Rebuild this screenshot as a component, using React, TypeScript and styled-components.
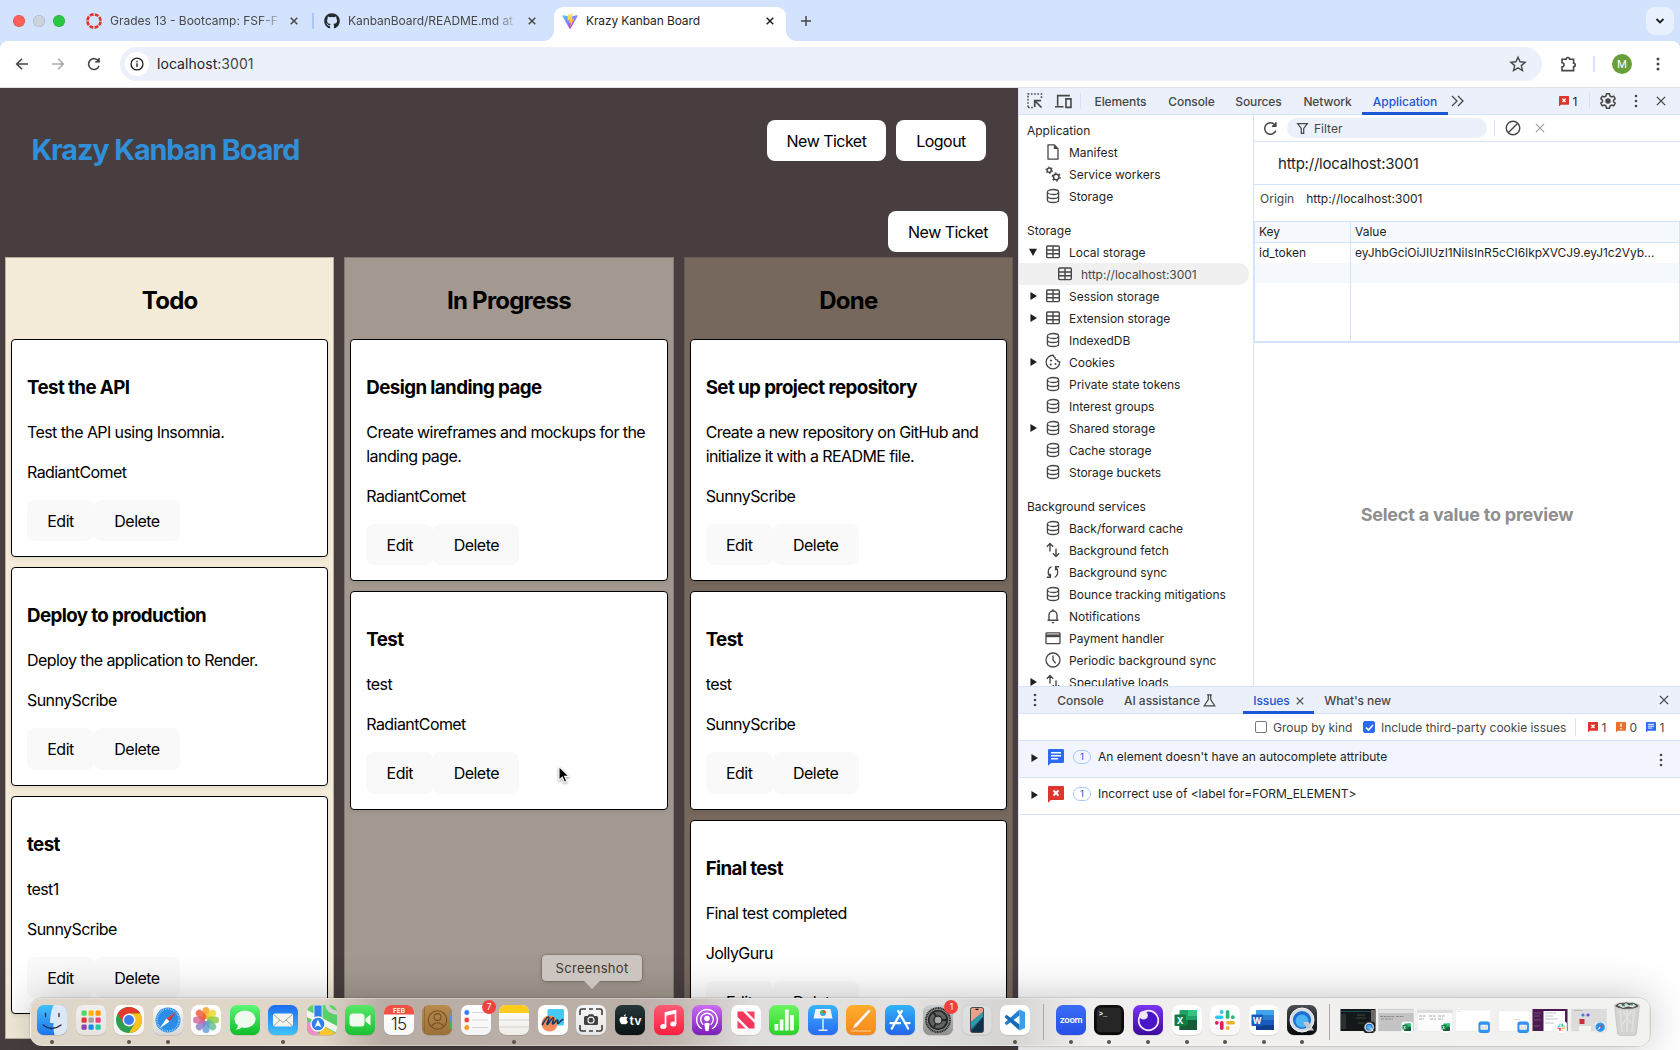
import React from 'react';
import styled, { createGlobalStyle, css } from 'styled-components';
import { FaApple, FaGithub } from 'react-icons/fa';

const GlobalStyle = createGlobalStyle`
  *, *::before, *::after { box-sizing: border-box; }
  body { margin: 0; font-family: Inter, Roboto, sans-serif; overflow: hidden; }
  svg { display: block; flex: none; }
`;

const line = '#d3e3fd';
const ink = '#1f1f1f';
const iconInk = '#474747';

const Screen = styled.div`
  position: relative;
  width: 1680px;
  height: 1050px;
  display: flex;
  flex-direction: column;
  overflow: hidden;
  background: ${line};
  color: ${ink};
`;

/* ---------- tab strip ---------- */
const TabStrip = styled.div`
  height: 41px;
  flex: none;
  display: flex;
  align-items: flex-end;
  padding-left: 13px;
  padding-right: 6px;
`;
const Lights = styled.div`
  display: flex;
  gap: 8px;
  height: 41px;
  align-items: center;
  width: 65px;
`;
const Light = styled.i<{ $c: string }>`
  width: 12px;
  height: 12px;
  border-radius: 50%;
  background: ${p => p.$c};
  box-shadow: inset 0 0 0 0.5px rgba(0, 0, 0, 0.18);
`;
const Tab = styled.div<{ $w: number; $active?: boolean }>`
  position: relative;
  width: ${p => p.$w}px;
  height: 34px;
  display: flex;
  align-items: center;
  gap: 8px;
  padding: 0 10px 6px 8px;
  font-size: 12px;
  color: ${p => (p.$active ? ink : '#474747')};
  ${p =>
    p.$active &&
    css`
      background: #fff;
      border-radius: 9px 9px 0 0;
      &::before,
      &::after {
        content: '';
        position: absolute;
        bottom: 0;
        width: 10px;
        height: 10px;
      }
      &::before {
        left: -10px;
        background: radial-gradient(circle at 0 0, transparent 9.5px, #fff 10px);
      }
      &::after {
        right: -10px;
        background: radial-gradient(circle at 100% 0, transparent 9.5px, #fff 10px);
      }
    `}
`;
const TabTitle = styled.span<{ $fade?: boolean; $ls?: number }>`
  flex: 1;
  min-width: 0;
  overflow: hidden;
  white-space: nowrap;
  line-height: 16px;
  letter-spacing: ${p => p.$ls ?? 0}px;
  ${p => p.$fade && 'mask-image: linear-gradient(90deg, #000 87%, transparent 102%);'}
`;
const TabDivider = styled.i`
  width: 2px;
  height: 16px;
  margin-bottom: 12px;
  background: #a8c7fa;
`;
const Spacer = styled.i`
  flex: 1;
`;
const NewTab = styled.div`
  width: 40px;
  height: 41px;
  display: flex;
  align-items: center;
  justify-content: center;
`;
const TabSearch = styled.div`
  width: 28px;
  height: 28px;
  margin-bottom: 6px;
  border-radius: 9px;
  background: #e9f0fe;
  display: flex;
  align-items: center;
  justify-content: center;
`;

/* ---------- address bar ---------- */
const Toolbar = styled.div`
  height: 47px;
  flex: none;
  display: flex;
  align-items: center;
  background: #fff;
  border-bottom: 1px solid #e3e3e3;
  border-radius: 8px 8px 0 0;
  padding-left: 14px;
`;
const NavButton = styled.div<{ $dim?: boolean }>`
  width: 36px;
  display: flex;
  justify-content: flex-start;
  opacity: ${p => (p.$dim ? 0.45 : 1)};
`;
const Omnibox = styled.div`
  width: 1422px;
  height: 34px;
  margin-left: -2px;
  border-radius: 17px;
  background: #ecf0fa;
  display: flex;
  align-items: center;
  padding: 0 15px 0 5px;
  font-size: 14px;
  line-height: 17px;
  letter-spacing: 0.05px;
`;
const Address = styled.span`
  padding-bottom: 1px;
`;
const SiteInfo = styled.div`
  width: 24px;
  height: 24px;
  border-radius: 50%;
  background: #fff;
  display: flex;
  align-items: center;
  justify-content: center;
  margin-right: 8px;
`;
const Port = styled.span`
  color: #474747;
`;
const ToolbarEnd = styled.div`
  flex: 1;
  display: flex;
  align-items: center;
  padding-left: 17px;
`;
const VRule = styled.i<{ $h?: number; $m?: string; $w?: number }>`
  flex: none;
  width: ${p => p.$w ?? 1}px;
  height: ${p => p.$h ?? 16}px;
  margin: ${p => p.$m ?? '0'};
  background: ${line};
`;
const Avatar = styled.div`
  width: 20px;
  height: 20px;
  border-radius: 50%;
  background: #689f38;
  color: #fff;
  font-size: 11px;
  display: flex;
  align-items: center;
  justify-content: center;
  margin-right: 16px;
`;

/* ---------- kanban page ---------- */
const Content = styled.div`
  flex: 1;
  min-height: 0;
  display: grid;
  grid-template-columns: 1018px 1fr;
`;
const Page = styled.main`
  background: #483e3f;
  overflow: hidden;
  color: #000;
  font-size: 16px;
  line-height: 24px;
  letter-spacing: -0.58px;
`;
const PageHeader = styled.header`
  height: 123px;
  padding: 32px;
  display: flex;
  justify-content: space-between;
  align-items: flex-start;
`;
const Brand = styled.h1`
  margin: 8px 0 0 -0.5px;
  font-size: 28.8px;
  line-height: 43px;
  letter-spacing: -1.1px;
  color: #2f8fd9;
`;
const ButtonRow = styled.div<{ $gap?: number; $end?: boolean }>`
  display: flex;
  gap: ${p => p.$gap ?? 0}px;
  ${p => p.$end && 'justify-content: flex-end; padding: 0 10px 5px;'}
`;
const Button = styled.button<{ $w: number; $soft?: boolean }>`
  width: ${p => p.$w}px;
  height: ${p => (p.$soft ? 41.4 : 41)}px;
  padding: 0;
  border: 0;
  border-radius: 8px;
  font: inherit;
  letter-spacing: -0.52px;
  color: #000;
  background: ${p => (p.$soft ? '#f9f9f9' : '#fff')};
`;
const Columns = styled.div`
  display: grid;
  grid-template-columns: repeat(3, 1fr);
  gap: 10px;
  padding: 0 5px;
`;
const Column = styled.section<{ $bg: string }>`
  height: 782px;
  overflow: hidden;
  border: 1px solid rgba(72, 62, 63, 0.35);
  background: ${p => p.$bg};
  padding: 0 5px;
`;
const ColumnTitle = styled.h2`
  margin: 25px 0 19.9px;
  text-align: center;
  font-size: 24px;
  line-height: 36px;
  letter-spacing: -0.78px;
`;
const Card = styled.article`
  margin-bottom: 10px;
  padding: 15px;
  background: #fff;
  border: 1px solid #000;
  border-radius: 4px;
  box-shadow: 0 2px 4px rgba(0, 0, 0, 0.08);
`;
const CardTitle = styled.h3`
  margin: 18.72px 0 18.3px;
  font-size: 18.72px;
  line-height: 28.08px;
  letter-spacing: -0.58px;
`;
const CardText = styled.p`
  margin: 0 0 16px;
`;

/* ---------- devtools ---------- */
const DevTools = styled.aside`
  min-width: 0;
  min-height: 0;
  display: flex;
  flex-direction: column;
  border-left: 1px solid ${line};
  background: #fff;
  font-size: 12px;
`;
const DevBar = styled.div`
  height: 27px;
  flex: none;
  display: flex;
  align-items: center;
  background: #ecf0fa;
  border-bottom: 1px solid ${line};
`;
const DevTab = styled.div<{ $w: number; $active?: boolean; $ls?: number; $gap?: number; $mr?: number }>`
  width: ${p => p.$w}px;
  height: 27px;
  margin-bottom: -1px;
  margin-right: ${p => p.$mr ?? 0}px;
  display: flex;
  align-items: center;
  justify-content: center;
  gap: ${p => p.$gap ?? 6}px;
  font-weight: 500;
  white-space: nowrap;
  letter-spacing: ${p => p.$ls ?? -0.1}px;
  color: ${p => (p.$active ? '#1a56d6' : '#474747')};
  box-shadow: ${p => (p.$active ? 'inset 0 -3px 0 #1a56d6' : 'none')};
`;
const DevBody = styled.div`
  height: 571px;
  flex: none;
  display: grid;
  grid-template-columns: 235px 1fr;
  overflow: hidden;
`;
const Tree = styled.nav`
  height: 571px;
  overflow: hidden;
  border-right: 1px solid ${line};
  padding: 5px 4px 0 0;
  letter-spacing: -0.03px;
`;
const TreeHead = styled.div`
  height: 21px;
  line-height: 22px;
  padding-left: 8px;
`;
const TreeGroup = styled.div`
  margin-bottom: 13px;
`;
const TreeRow = styled.div<{ $sel?: boolean; $deep?: boolean }>`
  height: 22px;
  display: flex;
  align-items: center;
  padding-left: ${p => (p.$deep ? 22 : 10)}px;
  border-radius: 0 11px 11px 0;
  background: ${p => (p.$sel ? '#f0f0f0' : 'transparent')};
  color: ${p => (p.$sel ? '#474747' : ink)};
`;
const Arrow = styled.i<{ $open?: boolean; $off?: boolean }>`
  flex: none;
  width: 8px;
  height: 8px;
  visibility: ${p => (p.$off ? 'hidden' : 'visible')};
  background: ${ink};
  clip-path: ${p => (p.$open ? 'polygon(0 8%, 100% 8%, 50% 100%)' : 'polygon(18% 0, 100% 50%, 18% 100%)')};
`;
const TreeIcon = styled.span`
  width: 16px;
  margin: 0 8px;
`;
const Detail = styled.div`
  min-width: 0;
  display: flex;
  flex-direction: column;
`;
const DetailBar = styled.div`
  height: 27px;
  flex: none;
  display: flex;
  align-items: center;
  border-bottom: 1px solid ${line};
  padding-left: 7.5px;
`;
const Filter = styled.div`
  width: 200px;
  height: 20px;
  margin: 0 7px 0 8.5px;
  padding-left: 9px;
  border-radius: 10px;
  background: #ecf0fa;
  color: #474747;
  display: flex;
  align-items: center;
  gap: 5px;
`;
const DetailTitle = styled.div`
  height: 43px;
  flex: none;
  line-height: 43px;
  padding-left: 24px;
  border-bottom: 1px solid ${line};
  font-size: 15px;
  letter-spacing: -0.22px;
`;
const OriginRow = styled.div`
  height: 36px;
  flex: none;
  display: flex;
  gap: 12px;
  line-height: 28px;
  padding-left: 6px;
  & > :first-child {
    color: #474747;
  }
`;
const Table = styled.div`
  height: 122px;
  flex: none;
  border: 1px solid ${line};
  border-bottom-width: 2px;
  display: grid;
  grid-template-columns: 96px 1fr;
  grid-template-rows: 21px 20px 20px 1fr;
`;
const Cell = styled.div<{ $alt?: boolean; $head?: boolean; $key?: boolean }>`
  min-width: 0;
  padding-left: 4px;
  line-height: 20px;
  white-space: nowrap;
  overflow: hidden;
  background: ${p => (p.$alt ? '#f5f9fd' : '#fff')};
  ${p => p.$head && `border-bottom: 1px solid ${line};`}
  ${p => p.$key && `border-right: 1px solid ${line};`}
`;
const Token = styled.span`
  letter-spacing: -0.06px;
`;
const Preview = styled.div`
  flex: 1;
  display: flex;
  align-items: center;
  justify-content: center;
  font-size: 18px;
  font-weight: 700;
  letter-spacing: -0.22px;
  color: #8f8f8f;
`;
const Drawer = styled.section`
  flex: 1;
  min-height: 0;
`;
const DrawerBar = styled(DevBar)`
  height: 28px;
  border-top: 1px solid ${line};
`;
const IssueTools = styled.div`
  height: 27px;
  display: flex;
  align-items: center;
  justify-content: flex-end;
  padding-right: 14px;
  color: #474747;
  border-bottom: 1px solid ${line};
`;
const Check = styled.i<{ $on?: boolean }>`
  width: 12px;
  height: 12px;
  margin-right: 6px;
  border-radius: 2px;
  border: 1px solid ${p => (p.$on ? '#2a6af5' : '#767676')};
  background: ${p => (p.$on ? '#2a6af5' : '#fff')};
  display: flex;
  align-items: center;
  justify-content: center;
`;
const Label = styled.span<{ $w?: number; $ls?: number; $up?: boolean }>`
  white-space: nowrap;
  letter-spacing: ${p => p.$ls ?? 0}px;
  ${p => p.$w && `width: ${p.$w}px;`}
  ${p => p.$up && 'margin-top: -1px;'}
`;
const Issue = styled.div<{ $bg?: string }>`
  height: 37px;
  display: flex;
  align-items: flex-start;
  padding: 8px 15px 0 11px;
  border-bottom: 1px solid ${line};
  background: ${p => p.$bg ?? '#fff'};
  line-height: 17px;
`;
const Pill = styled.span`
  width: 18px;
  height: 14px;
  margin: 1px 7px 0 9px;
  border: 1px solid #a8c7fa;
  border-radius: 7px;
  color: #1a56d6;
  font-size: 9.5px;
  line-height: 12px;
  text-align: center;
`;
const IssueArrow = styled(Arrow)`
  margin: 5px 10px 0 0;
`;
const Slot = styled.span<{ $m?: string }>`
  margin: ${p => p.$m ?? '0'};
`;

/* ---------- dock ---------- */
const Dock = styled.div`
  position: absolute;
  left: 30px;
  top: 998px;
  width: 1620px;
  height: 48px;
  border-radius: 12px;
  border: 1px solid rgba(255, 255, 255, 0.35);
  background: linear-gradient(
    90deg,
    #ded6c9 0,
    #dfd6c8 290px,
    #b9aea5 350px,
    #bbb0a8 600px,
    #c3bab4 650px,
    #dedddc 720px,
    #e3e2e1 870px,
    #d6d4d3 980px,
    #f0efee 1060px,
    #f2f2f0 1620px
  );
  box-shadow: 0 0 0 0.5px rgba(0, 0, 0, 0.22), 0 0 42px rgba(0, 0, 0, 0.25);
  display: flex;
  padding: 5.3px 0 0 2px;
`;
const DockItem = styled.div<{ $run?: boolean }>`
  position: relative;
  width: 38.52px;
  height: 40px;
  flex: none;
  display: flex;
  justify-content: center;
  ${p =>
    p.$run &&
    css`
      &::after {
        content: '';
        position: absolute;
        left: 17.25px;
        top: 35.7px;
        width: 4px;
        height: 4px;
        border-radius: 50%;
        background: #5a5247;
      }
    `}
`;
const DockRule = styled.div`
  width: 17.3px;
  display: flex;
  justify-content: center;
  &::after {
    content: '';
    width: 1px;
    height: 36px;
    background: #a9a7a5;
  }
`;
const Badge = styled.span`
  position: absolute;
  right: -1px;
  top: -4px;
  width: 14px;
  height: 14px;
  border-radius: 50%;
  background: #f0413c;
  color: #fff;
  font-size: 8.5px;
  line-height: 14px;
  text-align: center;
`;
const Tooltip = styled.div`
  position: absolute;
  left: 542px;
  top: 955px;
  width: 100px;
  height: 26px;
  border-radius: 4px;
  background: #ccc4be;
  box-shadow: 0 0 0 0.5px rgba(0, 0, 0, 0.25), 0 1px 5px rgba(0, 0, 0, 0.2);
  color: #3b3734;
  font-size: 13px;
  letter-spacing: 0.3px;
  line-height: 26px;
  text-align: center;
  &::after {
    content: '';
    position: absolute;
    left: 42px;
    top: 26px;
    width: 16px;
    height: 8px;
    background: #ccc4be;
    clip-path: polygon(0 0, 100% 0, 62% 75%, 50% 100%, 38% 75%);
  }
`;
const Cursor = styled.svg`
  position: absolute;
  left: 557px;
  top: 765px;
  filter: drop-shadow(0 1px 1px rgba(0, 0, 0, 0.4));
`;

/* ---------- small icons ---------- */
const Stroke = ({ d, s = 16, w = 1.4, c = iconInk, vb = 16, children }: any) => (
  <svg width={s} height={s} viewBox={`0 0 ${vb} ${vb}`} fill="none" stroke={c} strokeWidth={w}>
    {d && <path d={d} />}
    {children}
  </svg>
);
const Cross = ({ s = 8, w = 1.5, c = iconInk }: any) => <Stroke s={s} vb={8} w={w} c={c} d="M.7.7l6.6 6.6M7.3.7L.7 7.3" />;
const Dots = ({ r = 1.3 }: { r?: number }) => (
  <svg width="4" height="16" viewBox="0 0 4 16" fill={iconInk}>
    <circle cx="2" cy="3" r={r} />
    <circle cx="2" cy="8" r={r} />
    <circle cx="2" cy="13" r={r} />
  </svg>
);
const Reload = ({ s = 16, w = 1.6 }: any) => (
  <Stroke s={s} w={w}>
    <path d="M13 10a5.4 5.4 0 1 1-.6-5" />
    <path d="M13.4 2v4.2H9.2z" fill={iconInk} stroke="none" />
    <path d="M13 2.2v3.6H9.4" />
  </Stroke>
);
const Database = () => (
  <Stroke w={1.3}>
    <ellipse cx="8" cy="4" rx="5.6" ry="2.5" />
    <path d="M2.4 4v8c0 1.4 2.5 2.5 5.6 2.5s5.6-1.1 5.6-2.5V4M2.4 8c0 1.4 2.5 2.5 5.6 2.5s5.6-1.1 5.6-2.5" />
  </Stroke>
);
const Grid = () => (
  <Stroke w={1.4}>
    <rect x="1.7" y="2" width="12.6" height="11.6" rx="1" />
    <path d="M1.7 6h12.6M1.7 9.8h12.6M8 2v11.6" />
  </Stroke>
);
const File = () => (
  <Stroke w={1.3}>
    <path d="M3 .8h6.2l3.8 3.8v10.6H3z" strokeLinejoin="round" />
    <path d="M8.8 1v4H13z" fill={iconInk} stroke="none" />
  </Stroke>
);
const Gears = () => (
  <Stroke w={1.5}>
    <circle cx="4.2" cy="4.2" r="2.1" />
    <circle cx="4.2" cy="4.2" r="3.2" strokeDasharray="1.5 1.85" strokeWidth="1.1" />
    <circle cx="11.2" cy="11" r="2.7" />
    <circle cx="11.2" cy="11" r="4" strokeDasharray="1.9 2.29" strokeWidth="1.3" />
  </Stroke>
);
const Cookie = () => (
  <Stroke w={1.3}>
    <path d="M8.5 1.3a6.8 6.8 0 1 0 6.2 6.5c-1.3.1-2.3-.6-2.4-1.9-1.5.1-2.5-.8-2.3-2.3-1.1-.2-1.6-1.2-1.5-2.3z" />
    <g fill={iconInk} stroke="none">
      <circle cx="6" cy="6.5" r="1.1" />
      <circle cx="5.8" cy="10.5" r="1.1" />
      <circle cx="10.5" cy="10" r="1" />
    </g>
  </Stroke>
);
const UpDown = () => <Stroke w={1.4} d="M5 9.5V1.5M1.8 4.7L5 1.5l3.2 3.2M11 6.5v8M7.8 11.3l3.2 3.2 3.2-3.2" />;
const Sync = () => (
  <Stroke w={1.4}>
    <path d="M6.5 2.6C3.5 3.7 1.9 8.5 4.6 12M9.5 13.4c3-1.1 4.6-5.9 1.9-9.4M1.8 13.3h3.6V9.7M14.2 2.7h-3.6v3.6" />
  </Stroke>
);
const Bell = () => (
  <Stroke w={1.4}>
    <path d="M2.5 12.3h11M4 12V7a4 4 0 0 1 8 0v5M8 1.2v1.8" />
    <path d="M6.6 14h2.8a1.4 1.4 0 0 1-2.8 0z" fill={iconInk} stroke="none" />
  </Stroke>
);
const CardIcon = () => (
  <Stroke w={1.3}>
    <rect x="1" y="2.8" width="14" height="10.8" rx=".7" />
    <path d="M1 5.8h14" strokeWidth="2.8" />
  </Stroke>
);
const Clock = () => (
  <Stroke w={1.3}>
    <circle cx="8" cy="8" r="7" />
    <path d="M8 3.5V8l2.8 3.3" />
  </Stroke>
);
const Bubble = ({ kind, s }: { kind: 'x' | '!' | 't'; s: number }) => (
  <svg width={s} height={s * 1.05} viewBox="0 0 16 16.8">
    <path d="M1 0h14q1 0 1 1v12q0 1-1 1H3L0 16.8V1q0-1 1-1z" fill={kind === 'x' ? '#dc362e' : kind === '!' ? '#e8702a' : '#2a6af5'} />
    {kind === 'x' && <path d="M5.5 4.5l5 5m0-5l-5 5" stroke="#fff" strokeWidth="2" />}
    {kind === '!' && <path d="M8 2.5v5.5M8 9.5v2" stroke="#fff" strokeWidth="2" />}
    {kind === 't' && <path d="M3 3.7h10M3 6.7h10M3 9.7h7" stroke="#fff" strokeWidth="1.5" />}
  </svg>
);
const ViteLogo = () => (
  <svg width="16" height="16" viewBox="0 0 32 32">
    <defs>
      <linearGradient id="va" x1="0" y1="0" x2=".6" y2="1">
        <stop stopColor="#41d1ff" />
        <stop offset="1" stopColor="#bd34fe" />
      </linearGradient>
      <linearGradient id="vb" x1=".4" y1="0" x2=".6" y2="1">
        <stop stopColor="#ffea83" />
        <stop offset="1" stopColor="#ffa800" />
      </linearGradient>
    </defs>
    <path d="M31 6.3L17 31q-1 1.5-2 0L1 6.3Q.5 4.5 2.3 4.7L16 7.2l13.7-2.5Q31.5 4.5 31 6.3z" fill="url(#va)" />
    <path d="M22.3 1.2l-10 2q-.6.1-.7.8L11 14.3q0 .9.9.7l2.8-.6q.9-.1.7.7l-.9 4q-.2.9.7.7l1.7-.5q.9-.2.7.7l-1.3 6q0 1 .7.3L24 12q.4-.9-.6-.8l-3 .5q-.8.1-.6-.6l2-9q.2-1-.5-.9z" fill="url(#vb)" />
  </svg>
);

/* ---------- dock artwork ---------- */
const TileSvg = styled.svg`
  overflow: visible;
`;
const Tile = ({ a, b, id, children, edge }: any) => (
  <TileSvg width="32" height="32" viewBox="-1 -1 32 32">
    <defs>
      <linearGradient id={`g${id}`} x1="0" y1="0" x2="0" y2="1">
        <stop stopColor={a} />
        <stop offset="1" stopColor={b} />
      </linearGradient>
      <clipPath id={`c${id}`}>
        <rect width="30" height="30" rx="7" />
      </clipPath>
    </defs>
    <rect y=".6" width="30" height="30" rx="7" fill="rgba(0,0,0,.2)" />
    <rect width="30" height="30" rx="7" fill={`url(#g${id})`} stroke={edge} />
    <g clipPath={`url(#c${id})`}>{children}</g>
  </TileSvg>
);

const petals = ['#f9a01b', '#e6d72a', '#8fc93a', '#5fbf8f', '#5b9fd8', '#8a7cc8', '#d5659a', '#ee5a3a'];
const gridColors = ['#4cd964', '#ffb300', '#ff9500', '#e53935', '#9e9e9e', '#ec407a', '#8e44ad', '#1e88e5', '#26c6a0'];

const slackGlyph = (
  <g>
    <g fill="#36c5f0"><rect x="5" y="10.5" width="8.5" height="3.6" rx="1.8" /><circle cx="11.7" cy="7" r="1.9" /></g>
    <g fill="#2eb67d"><rect x="15.8" y="5" width="3.6" height="9" rx="1.8" /><circle cx="22.8" cy="12.2" r="1.9" /></g>
    <g fill="#ecb22e"><rect x="16" y="16" width="9" height="3.6" rx="1.8" /><circle cx="17.7" cy="23" r="1.9" /></g>
    <g fill="#e01e5a"><rect x="10" y="16" width="3.6" height="9" rx="1.8" /><circle cx="6.8" cy="17.8" r="1.9" /></g>
  </g>
);
const compass = (
  <g>
    <circle cx="15" cy="15" r="12.5" fill="#2a8ee8" />
    <circle cx="15" cy="15" r="11" fill="none" stroke="#fff" strokeWidth="1.8" strokeDasharray=".5 1.23" opacity=".8" />
    <path d="M23.5 6.5L13.5 13.5l1.5 1.5z" fill="#f44336" />
    <path d="M23.5 6.5L16.5 16.5l-1.5-1.5z" fill="#d32f2f" />
    <path d="M6.5 23.5l7-10 3 3z" fill="#fff" />
  </g>
);
const envelope = (
  <g>
    <rect x="5" y="8.5" width="20" height="13" rx="2" fill="#f3f3ee" />
    <path d="M5.5 9.5l9.5 8 9.5-8M5.5 21l6.5-6M24.5 21L18 15" stroke="#8f8f8f" fill="none" strokeWidth=".8" />
  </g>
);
const quick = (
  <g>
    <circle cx="15" cy="15" r="12" fill="#d5dbe0" />
    <circle cx="15" cy="15" r="9" fill="#1f6fd0" />
    <circle cx="15" cy="16" r="6.5" fill="#4ab4f4" />
    <path d="M16 17h5.5l5.5 8.5h-6z" fill="#c4c9cf" />
    <circle cx="15" cy="15" r="12" fill="none" stroke="#f2f4f6" strokeWidth="1" />
  </g>
);
const excel = (
  <g>
    <rect x="7.5" y="5" width="17.5" height="20" rx="1" fill="#21a366" />
    <path d="M16 5h9v6h-9z" fill="#33c481" />
    <path d="M16 15h9v5h-9zM7.5 20H25v5H7.5z" fill="#185c37" />
    <path d="M7.5 15H16v5H7.5z" fill="#107c41" />
    <rect x="2.5" y="9.5" width="11.5" height="11.5" rx="1" fill="#107c41" />
    <text x="8.2" y="18.5" fontSize="9" fontWeight="700" textAnchor="middle" fill="#fff">X</text>
  </g>
);

type App = { id: string; run?: boolean; badge?: string; art: React.ReactNode };
const apps: App[] = [
  { id: 'finder', run: true, art: (
    <Tile id="finder" a="#3fc0fb" b="#1e74f0">
      <path d="M16.5 0H30v30H17.5q-1.5-6-1-12h-3.5Q13 8 16.5 0z" fill="#dde8f4" />
      <path d="M8.5 8.5v3M22 8.5v3M6 20q9 7 18 0" stroke="#1d2c45" strokeWidth="1.3" fill="none" strokeLinecap="round" />
    </Tile>) },
  { id: 'launch', art: (
    <Tile id="launch" a="#f1efee" b="#e6e3df">
      {gridColors.map((c, i) => <rect key={c} x={5.5 + (i % 3) * 7} y={5.5 + Math.floor(i / 3) * 7} width="5.2" height="5.2" rx="1.2" fill={c} />)}
    </Tile>) },
  { id: 'chrome', run: true, art: (
    <Tile id="chrome" a="#fff" b="#f4f4f4">
      <circle cx="15" cy="15" r="13" fill="#2f9e4f" />
      <path d="M3.7 8.5A13 13 0 0 1 26.3 8.5H15L9.4 18.2z" fill="#e2392d" />
      <path d="M26.3 8.5A13 13 0 0 1 15 28l5.7-9.8L15 8.5z" fill="#fbc116" />
      <circle cx="15" cy="15" r="6.4" fill="#fff" />
      <circle cx="15" cy="15" r="5" fill="#3b7ded" />
    </Tile>) },
  { id: 'safari', run: true, art: <Tile id="safari" a="#fafafa" b="#d8d8d8">{compass}</Tile> },
  { id: 'photos', art: (
    <Tile id="photos" a="#fff" b="#fafafa">
      {petals.map((c, i) => <rect key={c} x="11.5" y="2" width="7" height="12" rx="3.5" fill={c} opacity=".82" transform={`rotate(${i * 45} 15 15)`} />)}
    </Tile>) },
  { id: 'messages', art: (
    <Tile id="messages" a="#5df777" b="#0cbd29">
      <ellipse cx="15" cy="14.2" rx="10.5" ry="8.7" fill="#f0fbf0" />
      <path d="M8 20q0 3-2.5 4.5 4 .5 6.5-2.5z" fill="#e4f7e4" />
    </Tile>) },
  { id: 'mail', run: true, art: <Tile id="mail" a="#1e6cf0" b="#3fc3fb">{envelope}</Tile> },
  { id: 'maps', art: (
    <Tile id="maps" a="#5fd56b" b="#4cc85c">
      <path d="M0 12l30 16v-7L0 5z" fill="#f5f5f0" />
      <path d="M0 16v14h12L8 20z" fill="#ef8fc6" />
      <path d="M14 24l10 6H12z" fill="#fbc62c" />
      <path d="M7 0h8v16H7z" fill="#2f7fec" stroke="#fff" strokeWidth=".8" />
      <path d="M20-2q0 9 12 10" stroke="#d2d2d2" strokeWidth="4" fill="none" />
      <path d="M16 24l14 8" stroke="#fbc62c" strokeWidth="5" />
      <circle cx="11" cy="19" r="7" fill="#2f7fec" stroke="#fff" strokeWidth="1.3" />
      <path d="M11 14.5l3.5 8-3.5-2-3.5 2z" fill="#fff" />
    </Tile>) },
  { id: 'facetime', art: (
    <Tile id="facetime" a="#57e768" b="#1cc034">
      <rect x="4.5" y="8.5" width="15" height="13" rx="3.5" fill="#eefbee" />
      <path d="M20.5 13.5l5-4v11l-5-4z" fill="#eefbee" />
    </Tile>) },
  { id: 'calendar', art: (
    <Tile id="calendar" a="#fff" b="#f7f7f7">
      <path d="M0 0h30v9.5H0z" fill="#ee5145" />
      <text x="15" y="7.5" fontSize="6.5" fontWeight="600" textAnchor="middle" fill="#fff">FEB</text>
      <text x="14.8" y="25" fontSize="17" fontWeight="300" textAnchor="middle" fill="#222" letterSpacing="-.5">15</text>
    </Tile>) },
  { id: 'contacts', art: (
    <Tile id="contacts" a="#b98b4e" b="#9b7038">
      <path d="M27.5 5h3v6h-3z" fill="#888" /><path d="M27.5 11h3v6h-3z" fill="#3b9ae0" /><path d="M27.5 17h3v7h-3z" fill="#45b24f" />
      <g fill="none" stroke="#755225" strokeWidth="1.1"><circle cx="15.5" cy="15" r="9.2" /><circle cx="15.5" cy="12" r="3.4" /><path d="M9 21.5q6.5-7.5 13 0" /></g>
      <path d="M2.5 0v30" stroke="#8a6230" strokeWidth=".7" />
    </Tile>) },
  { id: 'reminders', badge: '7', art: (
    <Tile id="reminders" a="#fff" b="#f4f4f4">
      {['#2f7bf6', '#f0463b', '#f7941d'].map((c, i) => (
        <g key={c}><circle cx="5.8" cy={7.5 + i * 7.5} r="2.2" fill={c} stroke={c} strokeOpacity=".3" strokeWidth="1.4" /><path d={`M11 ${7.5 + i * 7.5}h16`} stroke="#cfcfcf" strokeWidth=".9" /></g>
      ))}
    </Tile>) },
  { id: 'notes', run: true, art: (
    <Tile id="notes" a="#fff" b="#eeece7">
      <path d="M0 0h30v8H0z" fill="#fccb1c" />
      <path d="M0 15h30M0 22h30" stroke="#cfcbc4" strokeWidth=".8" />
    </Tile>) },
  { id: 'freeform', art: (
    <Tile id="freeform" a="#fff" b="#fff">
      <rect x="9.5" y="4" width="16.5" height="16.5" rx="1.5" fill="#45c8f5" />
      <circle cx="11.5" cy="18.5" r="8" fill="#f58a5a" />
      <path d="M4.5 19.5C7 15 9.5 11.5 10.8 12.2S8 19 9.2 19.5s4.5-7.5 6-6.8-1.7 6-.4 6.3 3.2-4.5 4.5-4-.6 3.3.6 3.5 2.5-3 5-4" stroke="#17365f" strokeWidth="1.6" fill="none" strokeLinecap="round" />
    </Tile>) },
  { id: 'screenshot', art: (
    <Tile id="screenshot" a="#f6f6f6" b="#e6e6e6">
      <path d="M4 10V6q0-2 2-2h4M13 4h4M20 4h4q2 0 2 2v4M26 20v4q0 2-2 2h-4M17 26h-4M10 26H6q-2 0-2-2v-4" stroke="#3c3c3c" strokeWidth="1.6" fill="none" />
      <path d="M9.5 11h2.3l1-1.7h4.4l1 1.7h2.3q1.5 0 1.5 1.5v6q0 1.5-1.5 1.5h-11Q8 20 8 18.5v-6Q8 11 9.5 11z" fill="#404040" />
      <circle cx="15" cy="15.2" r="3" fill="none" stroke="#eee" strokeWidth="1.2" />
    </Tile>) },
  { id: 'tv', art: (
    <Tile id="tv" a="#26383a" b="#0b1213">
      <g transform="translate(3 8.5)"><FaApple size={11.5} color="#fff" /></g>
      <text x="14.5" y="19.5" fontSize="12.5" fontWeight="600" fill="#fff">tv</text>
    </Tile>) },
  { id: 'music', art: (
    <Tile id="music" a="#fc5c74" b="#fa1f3f">
      <path d="M11.5 21V8l10-2.3v13" stroke="#fff" strokeWidth="1.7" fill="none" /><path d="M11 7.5l11-2.5v3.5L11 11z" fill="#fff" />
      <ellipse cx="9.3" cy="21.5" rx="3.1" ry="2.5" fill="#fff" /><ellipse cx="19.3" cy="19" rx="3.1" ry="2.5" fill="#fff" />
    </Tile>) },
  { id: 'podcasts', art: (
    <Tile id="podcasts" a="#cc6cf3" b="#7a1fb8">
      <g fill="none" stroke="#fff" strokeWidth="1.4" strokeLinecap="round"><path d="M9.5 23.5a10.3 10.3 0 1 1 11 0" /><path d="M10.8 19.2a6.3 6.3 0 1 1 8.4 0" /></g>
      <circle cx="15" cy="13.5" r="2.8" fill="#fff" /><path d="M12.3 18.5q2.7-1.6 5.4 0l-1 7q-1.7 1.6-3.4 0z" fill="#fff" />
    </Tile>) },
  { id: 'news', art: (
    <Tile id="news" a="#fff" b="#f8f8f8">
      <path d="M6.5 6.5h5.5l11.5 11.5v5.5H18L6.5 12z" fill="#f5365c" /><path d="M15.5 6.5h8v8zM6.5 15.5v8h8z" fill="#f5365c" opacity=".95" />
    </Tile>) },
  { id: 'numbers', art: (
    <Tile id="numbers" a="#6cf562" b="#2bd02a">
      <g fill="#f4fff2"><rect x="5.5" y="19" width="3.8" height="6.5" /><rect x="10.7" y="14.5" width="3.8" height="11" /><rect x="15.9" y="4.5" width="3.8" height="21" /><rect x="21.1" y="10" width="3.8" height="15.5" /></g>
    </Tile>) },
  { id: 'keynote', art: (
    <Tile id="keynote" a="#35b4f8" b="#2a6af3">
      <path d="M7.5 4h15l2 9.5h-19z" fill="#f1f3f5" /><path d="M15 14v10.5M10.5 25.3h9" stroke="#e4ecf5" strokeWidth="1.5" />
      <circle cx="15" cy="8" r="2.9" fill="#37a5e8" /><path d="M15 8V5.1A2.9 2.9 0 0 1 17.9 8z" fill="#f5512f" /><path d="M15 8h-2.9A2.9 2.9 0 0 1 15 5.1z" fill="#5bc236" />
    </Tile>) },
  { id: 'pages', art: (
    <Tile id="pages" a="#fbad2c" b="#f8881c">
      <path d="M5 26h20" stroke="#fcd49a" strokeWidth="1.2" />
      <path d="M22.5 4.5q2.5 0 2 2L11 21.5 6.5 24l2-4.5z" fill="#fdfaf5" stroke="#d6a068" strokeWidth=".5" />
    </Tile>) },
  { id: 'appstore', art: (
    <Tile id="appstore" a="#2fb3f7" b="#2666e8">
      <g stroke="#fff" strokeWidth="2.3" strokeLinecap="round"><path d="M16.8 6L8.5 20.5M13.2 6l8.3 14.5M22.3 22l.8 1.5M7.6 22.3l-.8 1.2M5.5 18.2h9.5M20 18.2h4.5" /></g>
    </Tile>) },
  { id: 'settings', badge: '1', art: (
    <Tile id="settings" a="#c9cfcf" b="#8f8f8d">
      <circle cx="15" cy="15" r="12" fill="#8d8f8f" stroke="#2e3030" strokeWidth="2" strokeDasharray="1.2 .5" />
      <circle cx="15" cy="15" r="9.3" fill="#606262" stroke="#242626" strokeWidth="1.8" />
      <circle cx="15" cy="15" r="4" fill="#aaa" stroke="#242626" strokeWidth="1.3" />
      <path d="M19 15h5.5M13 18.5l-2.8 4.7M13 11.5l-2.8-4.7" stroke="#242626" strokeWidth="1.8" />
    </Tile>) },
  { id: 'phone', art: (
    <Tile id="phone" a="#dde0e1" b="#dcdcdb" edge="#cfcfcf">
      <rect x="8.5" y="2.5" width="13" height="25" rx="2" fill="#14566d" />
      <path d="M9 3h12v4L9 17z" fill="#eca08b" /><path d="M9 17L21 7v5L9 24z" fill="#2a9bab" /><path d="M9 27l12-15v15z" fill="#0e3148" />
      <rect x="8.5" y="2.5" width="13" height="25" rx="2" fill="none" stroke="#4a4a4a" /><path d="M13.5 4.3h3" stroke="#111" strokeWidth="1.3" />
    </Tile>) },
  { id: 'vscode', run: true, art: (
    <Tile id="vscode" a="#fff" b="#fff">
      <path d="M19.5 4.5l5.5 2.6v15.8l-5.5 2.6z" fill="#3aa0ee" />
      <path d="M19.5 4.5L4.5 18l2 2.3L19.5 10.5z" fill="#1f7fcf" /><path d="M19.5 25.5L4.5 12l2-2.3L19.5 19.5z" fill="#1769b5" />
    </Tile>) },
];
const apps2: App[] = [
  { id: 'zoom', run: true, art: (
    <Tile id="zoom" a="#3a6df7" b="#2750e8"><text x="15" y="17.8" fontSize="9" fontWeight="600" textAnchor="middle" fill="#fff" letterSpacing="-.4">zoom</text></Tile>) },
  { id: 'term', run: true, art: (
    <Tile id="term" a="#111" b="#090909"><rect x="2.7" y="2.7" width="24.6" height="24.6" rx="4" fill="#262626" /><text x="4.8" y="11" fontSize="7" fontWeight="700" fontFamily="Liberation Mono, monospace" fill="#fff">&gt;_</text></Tile>) },
  { id: 'insomnia', run: true, art: (
    <Tile id="insomnia" a="#7a35f5" b="#3d0a9c">
      <circle cx="15.5" cy="15.5" r="9.8" fill="#4a14c8" stroke="#efe8fb" strokeWidth="1.7" /><circle cx="10.5" cy="10.3" r="4.3" fill="#efe8fb" />
    </Tile>) },
  { id: 'excel', run: true, art: <Tile id="excel" a="#fff" b="#fff">{excel}</Tile> },
  { id: 'slack', run: true, art: <Tile id="slack" a="#fff" b="#f7f7f7">{slackGlyph}</Tile> },
  { id: 'word', run: true, art: (
    <Tile id="word" a="#fff" b="#fff">
      <path d="M7 5h18v5H7z" fill="#41a5ee" /><path d="M7 10h18v5H7z" fill="#2b7cd3" /><path d="M7 15h18v5H7z" fill="#185abd" /><path d="M7 20h18v5H7z" fill="#103f91" />
      <rect x="2.5" y="9.5" width="11.5" height="11.5" rx="1" fill="#185abd" /><text x="8.2" y="18.5" fontSize="8.5" fontWeight="700" textAnchor="middle" fill="#fff">W</text>
    </Tile>) },
  { id: 'quicktime', run: true, art: <Tile id="quicktime" a="#4a4d52" b="#070809">{quick}</Tile> },
];

const mini = (glyph: React.ReactNode, bg: string) => (
  <g transform="translate(23.5 16.5) scale(.38)"><rect width="30" height="30" rx="7" fill={bg} stroke="rgba(0,0,0,.12)" />{glyph}</g>
);
const Thumb = ({ h = 22, top = 0, bg, children, badge }: any) => (
  <TileSvg width="36" height="32" viewBox="0 -1 36 32">
    <rect x=".5" y={4 + top} width="35" height={h - top} fill={bg} stroke="rgba(0,0,0,.06)" strokeWidth=".5" />
    {children}
    {badge}
  </TileSvg>
);
const thumbs = [
  <Thumb bg="#15181a" badge={mini(quick, '#222')}><path d="M1 6.5h30" stroke="#1d4f55" /><path d="M1 9h5v15H1z" fill="#2b2f31" /><path d="M17 10h8M16 13h10M18 18h7" stroke="#3e5a45" strokeWidth=".8" /><path d="M31 5h4v14h-4z" fill="#6d6864" /></Thumb>,
  <Thumb bg="#c3c3c3" badge={mini(excel, '#fff')}><path d="M.5 4.5h35v3.5H.5z" fill="#e2e2e2" /><path d="M2 11.5h14M18 11.5h8M3 14h12" stroke="#8b8b8b" strokeWidth="1" strokeDasharray="3 .7" /></Thumb>,
  <Thumb bg="#fcfcfc" badge={mini(excel, '#fff')}><path d="M.5 4.5h35v3.5H.5z" fill="#dedede" /><path d="M2 11h7M12 11h7M21 11h7M2 14h5M13 14h6M21 14h5" stroke="#a9a9a9" strokeWidth="1" strokeDasharray="3 .7" /></Thumb>,
  <Thumb bg="#fff" top={1} badge={mini(envelope, '#2e94f5')}><path d="M3 6.5h2" stroke="#ccc" strokeWidth=".7" /></Thumb>,
  <Thumb bg="#fff" top={2} badge={mini(envelope, '#2e94f5')}><path d="M1 6h4v20H1z" fill="#efefef" /><path d="M20 14.5h6" stroke="#ccc" strokeWidth=".7" /></Thumb>,
  <Thumb bg="#fff" badge={mini(slackGlyph, '#fff')}><path d="M.5 4h35v2H.5zM.5 4h11v22H.5zM33 4h2.5v22H33z" fill="#4b1a50" /><path d="M2 8h7M2 11h6M2 15h7M2 21h6" stroke="#8b6a90" strokeWidth=".7" /><path d="M13 8h11M13 11h8M13 14h13M13 18h9" stroke="#b4b0c4" strokeWidth=".8" /></Thumb>,
  <Thumb bg="#dcdcdc" badge={mini(compass, '#eee')}><path d="M3 5.5h9" stroke="#aaa" strokeWidth=".7" /><circle cx="12" cy="10" r="1.6" fill="#3f7ae0" /><circle cx="17" cy="10" r="1.6" fill="#7b46d8" /><rect x="8.5" y="14" width="5" height="5" fill="#cf2f37" /><path d="M8 21h12v5H8z" fill="#f3f5f3" /></Thumb>,
];
const Trash = () => (
  <svg width="28" height="36" viewBox="0 0 28 36">
    <path d="M1.5 4h25L23.5 32q-.3 2.5-3 2.5h-13q-2.7 0-3-2.5z" fill="#d3d3d2" stroke="#bdbdbb" strokeWidth=".7" />
    <path d="M7 9l2 22M14 9v22M21 9l-2 22M10 10l8 12M19 9L9 24" stroke="#ececeb" strokeWidth="1.8" opacity=".55" />
    <ellipse cx="14" cy="4.8" rx="12" ry="3.6" fill="#5d5d5b" stroke="#d9d9d7" strokeWidth=".8" />
    <path d="M4 4.5l3-2.5 3 2 3-2.5 3 2.5 4-2 4 3-4 2-5-1-5 1.5z" fill="#dedede" stroke="#333" strokeWidth=".8" />
    <path d="M9 4.5h3M17 3.5h3" stroke="#2f9e4f" strokeWidth="1.3" />
  </svg>
);

/* ---------- data ---------- */
type Ticket = [string, string, string];
const columns: { name: string; bg: string; tickets: Ticket[] }[] = [
  { name: 'Todo', bg: '#f4ebd9', tickets: [
    ['Test the API', 'Test the API using Insomnia.', 'RadiantComet'],
    ['Deploy to production', 'Deploy the application to Render.', 'SunnyScribe'],
    ['test', 'test1', 'SunnyScribe'],
  ] },
  { name: 'In Progress', bg: '#a39990', tickets: [
    ['Design landing page', 'Create wireframes and mockups for the landing page.', 'RadiantComet'],
    ['Test', 'test', 'RadiantComet'],
  ] },
  { name: 'Done', bg: '#76685d', tickets: [
    ['Set up project repository', 'Create a new repository on GitHub and initialize it with a README file.', 'SunnyScribe'],
    ['Test', 'test', 'SunnyScribe'],
    ['Final test', 'Final test completed', 'JollyGuru'],
  ] },
];

type Node = { t: string; i: React.FC; a?: 'open' | 'closed'; sel?: boolean };
const tree: { head: string; rows: Node[] }[] = [
  { head: 'Application', rows: [
    { t: 'Manifest', i: File }, { t: 'Service workers', i: Gears }, { t: 'Storage', i: Database },
  ] },
  { head: 'Storage', rows: [
    { t: 'Local storage', i: Grid, a: 'open' },
    { t: 'http://localhost:3001', i: Grid, sel: true },
    { t: 'Session storage', i: Grid, a: 'closed' },
    { t: 'Extension storage', i: Grid, a: 'closed' },
    { t: 'IndexedDB', i: Database },
    { t: 'Cookies', i: Cookie, a: 'closed' },
    { t: 'Private state tokens', i: Database },
    { t: 'Interest groups', i: Database },
    { t: 'Shared storage', i: Database, a: 'closed' },
    { t: 'Cache storage', i: Database },
    { t: 'Storage buckets', i: Database },
  ] },
  { head: 'Background services', rows: [
    { t: 'Back/forward cache', i: Database },
    { t: 'Background fetch', i: UpDown },
    { t: 'Background sync', i: Sync },
    { t: 'Bounce tracking mitigations', i: Database },
    { t: 'Notifications', i: Bell },
    { t: 'Payment handler', i: CardIcon },
    { t: 'Periodic background sync', i: Clock },
    { t: 'Speculative loads', i: UpDown, a: 'closed' },
  ] },
];

const DockApp = ({ app }: { app: App }) => (
  <DockItem $run={app.run}>
    {app.art}
    {app.badge && <Badge>{app.badge}</Badge>}
  </DockItem>
);

export default function App() {
  return (
    <Screen>
      <GlobalStyle />
      <TabStrip>
        <Lights>
          <Light $c="#fe5f57" />
          <Light $c="#ccd3df" />
          <Light $c="#28c840" />
        </Lights>
        <Tab $w={234}>
          <Stroke s={16} w={2.6} c="#e4312b">
            <circle cx="8" cy="8" r="6.6" strokeDasharray="4 1.184" transform="rotate(5 8 8)" />
          </Stroke>
          <TabTitle $fade>Grades 13 - Bootcamp: FSF-F</TabTitle>
          <Slot $m="0 4px 0 1px"><Cross /></Slot>
        </Tab>
        <TabDivider />
        <Tab $w={232}>
          <Slot $m="0 0 0 2px"><FaGithub size={16} color="#24292f" /></Slot>
          <TabTitle $fade $ls={-0.06}>KanbanBoard/README.md at</TabTitle>
          <Slot $m="0 0 0 4px"><Cross /></Slot>
        </Tab>
        <Slot $m="0 0 0 8px">
          <Tab $w={232} $active>
            <ViteLogo />
            <TabTitle $ls={-0.13}>Krazy Kanban Board</TabTitle>
            <Slot $m="0 2px 0 0"><Cross c="#1f1f1f" /></Slot>
          </Tab>
        </Slot>
        <NewTab><Stroke s={12} vb={12} w={1.5} d="M6 1v10M1 6h10" /></NewTab>
        <Spacer />
        <TabSearch><Stroke s={10} vb={10} w={1.8} c={ink} d="M1.5 3L5 6.5 8.5 3" /></TabSearch>
      </TabStrip>

      <Toolbar>
        <NavButton><Stroke w={1.6} d="M14 8H3M8 2.7L2.7 8 8 13.3" /></NavButton>
        <NavButton $dim><Stroke w={1.6} d="M2 8h11M8 2.7L13.3 8 8 13.3" /></NavButton>
        <NavButton><Reload /></NavButton>
        <Omnibox>
          <SiteInfo>
            <Stroke s={14} w={1.5} c={ink}><circle cx="8" cy="8" r="6.8" /><path d="M8 7.2v4.3M8 4.3v1.6" /></Stroke>
          </SiteInfo>
          <Address>localhost:<Port>3001</Port></Address>
          <Spacer />
          <Stroke s={18} vb={18} w={1.4} d="M9 2.2l2.1 4.6 5 .5-3.8 3.3 1.2 4.9L9 12.9l-4.5 2.6 1.2-4.9L1.9 7.3l5-.5z" />
        </Omnibox>
        <ToolbarEnd>
          <Stroke s={18} vb={18} w={1.6} d="M3 4.2h4.2a1.7 1.7 0 0 1 3.4 0h4v4a1.7 1.7 0 0 1 0 3.4v4H3v-3.8a2 2 0 0 0 0-4z" />
          <VRule $w={2} $m="0 17px 0 16px" />
          <Avatar>M</Avatar>
          <Slot $m="0 0 0 8px"><Dots r={1.5} /></Slot>
        </ToolbarEnd>
      </Toolbar>

      <Content>
        <Page>
          <PageHeader>
            <Brand>Krazy Kanban Board</Brand>
            <ButtonRow $gap={10}>
              <Button $w={119}>New Ticket</Button>
              <Button $w={90}>Logout</Button>
            </ButtonRow>
          </PageHeader>
          <ButtonRow $end><Button $w={120}>New Ticket</Button></ButtonRow>
          <Columns>
            {columns.map(col => (
              <Column key={col.name} $bg={col.bg}>
                <ColumnTitle>{col.name}</ColumnTitle>
                {col.tickets.map(([title, text, user]) => (
                  <Card key={title}>
                    <CardTitle>{title}</CardTitle>
                    <CardText>{text}</CardText>
                    <CardText>{user}</CardText>
                    <ButtonRow>
                      <Button $w={67} $soft>Edit</Button>
                      <Button $w={86} $soft>Delete</Button>
                    </ButtonRow>
                  </Card>
                ))}
              </Column>
            ))}
          </Columns>
        </Page>

        <DevTools>
          <DevBar>
            <Slot $m="0 12px 0 8px">
              <Stroke w={1.5}>
                <path d="M1 14V1h13.5v5" strokeDasharray="1.6 1.6" />
                <path d="M1 14.5h5" strokeDasharray="1.6 1.6" />
                <path d="M14.5 14.5L8 8M7.7 14V7.7H14" strokeWidth="1.7" />
              </Stroke>
            </Slot>
            <Stroke s={17} w={1.5}><path d="M2.5 12V2.5H14M0 13h8" /><path d="M10.3 5.5h4.7v8h-4.7z" /></Stroke>
            <VRule $m="0 1px 0 8px" />
            <DevTab $w={77}>Elements</DevTab>
            <DevTab $w={65}>Console</DevTab>
            <DevTab $w={69}>Sources</DevTab>
            <DevTab $w={69}>Network</DevTab>
            <DevTab $w={86} $active $ls={-0.04}>Application</DevTab>
            <Slot $m="0 0 0 2px"><Stroke s={14} vb={14} w={1.3} d="M2 2l5 5-5 5M8 2l5 5-5 5" /></Slot>
            <Spacer />
            <Bubble kind="x" s={10} />
            <Label $w={16}>&nbsp;1</Label>
            <VRule $m="0 9px 0 4px" />
            <Stroke s={18} vb={18} w={1.5}>
              <path d="M7.5 1.8h3l.5 2.2 1.5.9 2.2-.7 1.5 2.6-1.7 1.5v1.4l1.7 1.5-1.5 2.6-2.2-.7-1.5.9-.5 2.2h-3L7 14l-1.5-.9-2.2.7-1.5-2.6 1.7-1.5V8.3L1.8 6.8l1.5-2.6 2.2.7L7 4z" />
              <circle cx="9" cy="9" r="2" fill={iconInk} />
            </Stroke>
            <Slot $m="0 18px 0 17px"><Dots /></Slot>
            <Slot $m="0 14px 0 0"><Cross s={10} w={1.1} /></Slot>
          </DevBar>
          <DevBody>
            <Tree>
              {tree.map(g => (
                <TreeGroup key={g.head}>
                  <TreeHead>{g.head}</TreeHead>
                  {g.rows.map(r => (
                    <TreeRow key={r.t} $sel={r.sel} $deep={r.sel}>
                      <Arrow $off={!r.a} $open={r.a === 'open'} />
                      <TreeIcon><r.i /></TreeIcon>
                      {r.t}
                    </TreeRow>
                  ))}
                </TreeGroup>
              ))}
            </Tree>
            <Detail>
              <DetailBar>
                <Reload s={17} w={1.4} />
                <Filter>
                  <Stroke s={13} w={1.5} d="M2 2h12L9.5 8v6h-3V8z" />
                  Filter
                </Filter>
                <VRule />
                <Slot $m="0 14px 0 10px"><Stroke w={1.4}><circle cx="8" cy="8" r="6.8" /><path d="M12.8 3.2l-9.6 9.6" /></Stroke></Slot>
                <Cross s={10} w={1} c="#a0a0a0" />
              </DetailBar>
              <DetailTitle>http://localhost:3001</DetailTitle>
              <OriginRow><span>Origin</span><span>http://localhost:3001</span></OriginRow>
              <Table>
                <Cell $head $key $alt>Key</Cell>
                <Cell $head $alt>Value</Cell>
                <Cell $key>id_token</Cell>
                <Cell><Token>eyJhbGciOiJIUzI1NiIsInR5cCI6IkpXVCJ9.eyJ1c2Vyb...</Token></Cell>
                <Cell $key $alt />
                <Cell $alt />
                <Cell $key />
                <Cell />
              </Table>
              <Preview>Select a value to preview</Preview>
            </Detail>
          </DevBody>

          <Drawer>
            <DrawerBar>
              <Slot $m="0 15px 0 14px"><Dots /></Slot>
              <DevTab $w={57}>Console</DevTab>
              <DevTab $w={122} $gap={3} $mr={12} $ls={-0.02}>AI assistance<Stroke s={13} w={1.5} d="M5 1h6M6.5 1v6L1.5 14.5h13L9.5 7V1" /></DevTab>
              <DevTab $w={71} $active $gap={5}>Issues<Slot $m="0 0 0 1px"><Cross s={8} w={1.2} /></Slot></DevTab>
              <DevTab $w={87}>What's new</DevTab>
              <Spacer />
              <Slot $m="0 11px"><Cross s={10} w={1.1} /></Slot>
            </DrawerBar>
            <IssueTools>
              <Check />
              <Label $w={90}>Group by kind</Label>
              <Check $on><Stroke s={9} vb={9} w={1.6} c="#fff" d="M1 4.5L3.5 7 8 2" /></Check>
              <Label $w={194} $ls={-0.03}>Include third-party cookie issues</Label>
              <VRule $m="0 12px 0 0" $h={18} />
              <Bubble kind="x" s={10} /><Label $w={18}>&nbsp;1</Label>
              <Bubble kind="!" s={10} /><Label $w={20}>&nbsp;0</Label>
              <Bubble kind="t" s={10} /><Label $w={10}>&nbsp;1</Label>
            </IssueTools>
            <Issue $bg="#f2f5fd">
              <IssueArrow />
              <Bubble kind="t" s={16} />
              <Pill>1</Pill>
              <Label $up>An element doesn't have an autocomplete attribute</Label>
              <Spacer />
              <Slot $m="3px 2px 0 0"><Dots /></Slot>
            </Issue>
            <Issue>
              <IssueArrow />
              <Bubble kind="x" s={16} />
              <Pill>1</Pill>
              <Label $up $ls={-0.04}>Incorrect use of &lt;label for=FORM_ELEMENT&gt;</Label>
            </Issue>
          </Drawer>
        </DevTools>
      </Content>

      <Cursor width="14" height="20" viewBox="0 0 14 20">
        <path d="M2 1.5v13.8l3.2-3 2.2 5 2.4-1-2.2-4.9h4.5z" fill="#000" stroke="#fff" strokeWidth="1.1" />
      </Cursor>
      <Dock>
        {apps.map(a => <DockApp key={a.id} app={a} />)}
        <DockRule />
        {apps2.map(a => <DockApp key={a.id} app={a} />)}
        <DockRule />
        {thumbs.map((t, i) => <DockItem key={i}>{t}</DockItem>)}
        <DockItem><Slot $m="-3px 0 0"><Trash /></Slot></DockItem>
      </Dock>
      <Tooltip>Screenshot</Tooltip>
    </Screen>
  );
}
